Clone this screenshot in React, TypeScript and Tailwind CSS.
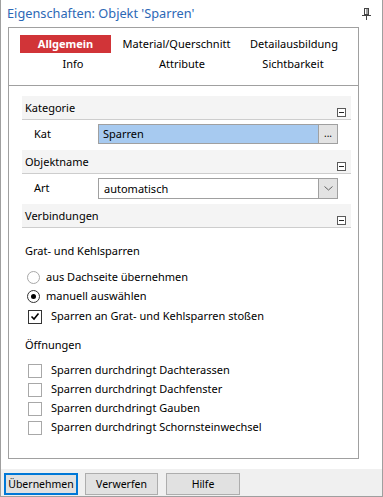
import React from "react";

function Pin() {
  return (
    <svg width="9" height="12" viewBox="0 0 9 12" className="block">
      <rect x="2.5" y="0.5" width="4" height="6" fill="none" stroke="#444" />
      <line x1="5" y1="1" x2="5" y2="6" stroke="#444" />
      <line x1="0" y1="7.5" x2="9" y2="7.5" stroke="#444" />
      <line x1="4.5" y1="8" x2="4.5" y2="12" stroke="#444" />
    </svg>
  );
}

function Minus() {
  return (
    <div className="w-[9px] h-[9px] border border-[#5a5a5a] bg-white flex items-center justify-center">
      <div className="w-[5px] h-[1px] bg-[#222]" />
    </div>
  );
}

function GroupHeader({ title }: { title: string }) {
  return (
    <div className="ml-[13px] w-[329px] h-[24px] bg-[#f4f4f4] border-b border-[#cdcdcd] flex justify-between">
      <span className="pl-[3px] leading-[23px]">{title}</span>
      <div className="self-end mb-[2px] mr-[5px]">
        <Minus />
      </div>
    </div>
  );
}

function Radio({ checked, label }: { checked?: boolean; label: string }) {
  return (
    <div className="h-[19px] flex items-center pl-[18px]">
      <div
        className={`w-[13px] h-[13px] rounded-full border bg-white flex items-center justify-center ${
          checked ? "border-[#333]" : "border-[#a8a8a8]"
        }`}
      >
        {checked ? <div className="w-[5px] h-[5px] rounded-full bg-black" /> : null}
      </div>
      <span className="ml-[6px]">{label}</span>
    </div>
  );
}

function Check({ checked, label }: { checked?: boolean; label: string }) {
  return (
    <div className="h-[19px] flex items-center pl-[19px]">
      <div
        className={`w-[14px] h-[14px] border bg-white flex items-center justify-center ${
          checked ? "border-[#333]" : "border-[#a8a8a8]"
        }`}
      >
        {checked ? (
          <svg width="10" height="9" viewBox="0 0 10 9">
            <polyline points="1.5,4.5 4,7 8.5,1.5" fill="none" stroke="#000" strokeWidth="1.6" />
          </svg>
        ) : null}
      </div>
      <span className="ml-[9px]">{label}</span>
    </div>
  );
}

export default function App() {
  return (
    <div className="w-[383px] h-[497px] bg-white border-x border-b border-[#9f9f9f] flex flex-col font-['Noto_Sans',sans-serif] text-[11px] text-black">
      <div className="h-[27px] flex items-center justify-between pl-[6px] pr-[11px]">
        <span className="text-[12.75px] text-[#2c68b6]">Eigenschaften: Objekt 'Sparren'</span>
        <Pin />
      </div>

      <div className="ml-[7px] w-[351px] h-[432px] border border-[#a0a0a0] flex flex-col">
        {/* tabs */}
        <div className="h-[58px] border-b border-[#a0a0a0] pt-[7px]">
          <div className="flex h-[18px] items-center">
            <div className="ml-[11px] w-[91px] h-[18px] bg-[#d13438] text-white font-bold text-[11px] flex items-center justify-center">
              Allgemein
            </div>
            <div className="ml-[10px] w-[111px] text-center">Material/Querschnitt</div>
            <div className="ml-[8px] w-[108px] text-center">Detailausbildung</div>
          </div>
          <div className="flex h-[18px] mt-[2px] items-center">
            <div className="ml-[11px] w-[106px] text-center">Info</div>
            <div className="ml-[5px] w-[102px] text-center">Attribute</div>
            <div className="ml-[7px] w-[106px] text-center">Sichtbarkeit</div>
          </div>
        </div>

        <div className="pt-[10px]">
          <GroupHeader title="Kategorie" />
          <div className="ml-[13px] w-[329px] h-[30px] pt-[4px] flex">
            <span className="w-[76px] pl-[12px] leading-[20px]">Kat</span>
            <div className="w-[240px] h-[20px] border border-[#a0a0a0] flex">
              <div className="flex-1 bg-[#a7caf0] pl-[4px] leading-[18px]">Sparren</div>
              <div className="w-[19px] border-l border-[#a0a0a0] bg-[#e3e3e3] text-[10px] leading-[16px] text-center">
                ...
              </div>
            </div>
          </div>

          <GroupHeader title="Objektname" />
          <div className="ml-[13px] w-[329px] h-[30px] pt-[4px] flex">
            <span className="w-[76px] pl-[12px] leading-[20px]">Art</span>
            <div className="w-[240px] h-[21px] border border-[#a0a0a0] flex">
              <div className="flex-1 bg-white pl-[5px] leading-[19px]">automatisch</div>
              <div className="w-[19px] border-l border-[#a0a0a0] bg-[#e3e3e3] flex items-center justify-center">
                <svg width="9" height="5" viewBox="0 0 9 5">
                  <polyline points="0.5,0.5 4.5,4 8.5,0.5" fill="none" stroke="#606060" />
                </svg>
              </div>
            </div>
          </div>

          <GroupHeader title="Verbindungen" />

          <div className="pl-[16px] mt-[15px] leading-[16px]">Grat- und Kehlsparren</div>
          <div className="mt-[9px]">
            <Radio label="aus Dachseite übernehmen" />
            <Radio checked label="manuell auswählen" />
            <div className="mt-[1px]">
              <Check checked label="Sparren an Grat- und Kehlsparren stoßen" />
            </div>
          </div>

          <div className="pl-[16px] mt-[11px] leading-[16px]">Öffnungen</div>
          <div className="mt-[8px]">
            <Check label="Sparren durchdringt Dachterassen" />
            <Check label="Sparren durchdringt Dachfenster" />
            <Check label="Sparren durchdringt Gauben" />
            <Check label="Sparren durchdringt Schornsteinwechsel" />
          </div>
        </div>
      </div>

      <div className="flex-1" />

      <div className="h-[27px] bg-[#f0f0f0] flex items-start pt-[4px] pl-[3px]">
        <button className="w-[74px] h-[22px] border-2 border-[#0078d7] bg-[#e1e1e1] text-[10.5px] leading-[18px]">
          Übernehmen
        </button>
        <button className="ml-[7px] w-[73px] h-[22px] border border-[#adadad] bg-[#e1e1e1] text-[10.5px] leading-[20px]">
          Verwerfen
        </button>
        <button className="ml-[8px] w-[74px] h-[22px] border border-[#adadad] bg-[#e1e1e1] text-[10.5px] leading-[20px]">
          Hilfe
        </button>
      </div>
    </div>
  );
}
